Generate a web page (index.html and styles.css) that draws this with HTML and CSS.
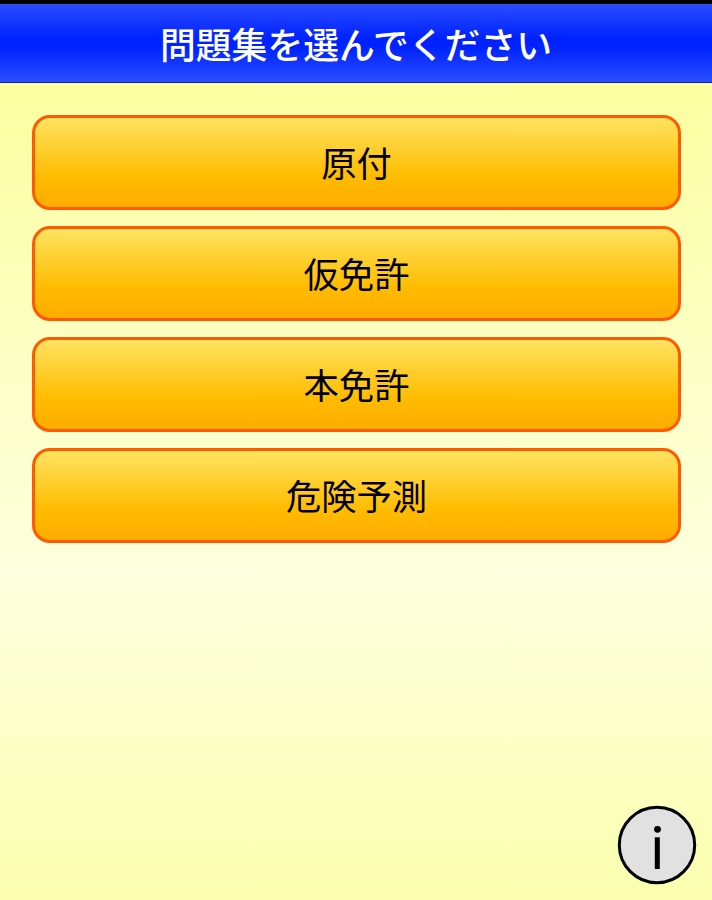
FILE: index.html
```html
<!DOCTYPE html>
<html lang="ja">
<head>
  <meta charset="UTF-8" />
  <meta name="viewport" content="width=device-width, initial-scale=1.0"/>
  <title>問題集</title>
  <link rel="stylesheet" href="styles.css">
</head>
<body>

  <header>
    <h1>問題集を選んでください</h1>
  </header>

  <main class="menu">
    <button>原付</button>
    <button>仮免許</button>
    <button>本免許</button>
    <button>危険予測</button>
  </main>

  <footer>
    <button class="info" aria-label="情報">
      <svg viewBox="0 0 80 80" width="80" height="80">
        <circle cx="40" cy="40" r="37.7" fill="#e1e1e1" stroke="#000" stroke-width="3"/>
        <circle cx="40.5" cy="24.3" r="3.4"/>
        <rect x="37.8" y="32.3" width="5" height="31.7"/>
      </svg>
    </button>
  </footer>

</body>
</html>
```

FILE: styles.css
```css
* {
  box-sizing: border-box;
  margin: 0;
  padding: 0;
  font-family: "Noto Sans CJK JP", sans-serif;
}

body {
  height: 900px;
  display: flex;
  flex-direction: column;
  overflow: hidden;
  background: linear-gradient(#faffa0 83px, #fdffde 575px, #fbffae 900px);
}

header {
  height: 83px;
  display: flex;
  align-items: center;
  justify-content: center;
  border-top: 4px solid #000;
  border-bottom: 1px solid #0a1fc0;
  background: linear-gradient(#2a4dff, #0022ff 45%, #0022ff 55%, #2a4dff);
}

header h1 {
  color: white;
  font-size: 35.8px;
  font-weight: 500;
  line-height: 78px;
}

.menu {
  display: flex;
  flex-direction: column;
  gap: 16px;
  padding: 32px 31px 0 32px;
}

.menu button {
  height: 95px;
  border: 3px solid #ff5a00;
  border-radius: 18px;
  background: linear-gradient(#ffe566, #ffbc00 65%, #ffaa00) border-box;
  color: #000;
  font-size: 35.3px;
  line-height: 88px;
  padding-bottom: 1px;
  cursor: pointer;
}

footer {
  display: flex;
  justify-content: flex-end;
  margin-top: auto;
  padding: 0 15px 15px 0;
}

.info {
  width: 80px;
  height: 80px;
  border: none;
  background: none;
  cursor: pointer;
}

.info svg {
  display: block;
}
```
